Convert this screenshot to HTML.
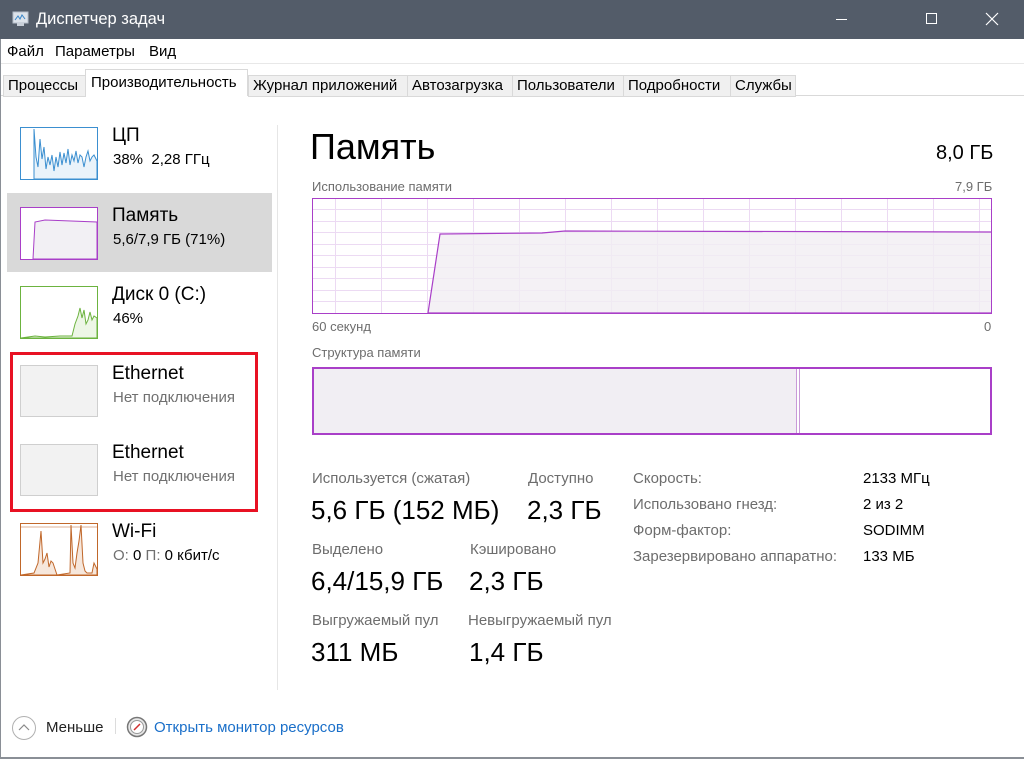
<!DOCTYPE html>
<html><head><meta charset="utf-8"><style>
*{margin:0;padding:0;box-sizing:border-box}
body{width:1024px;height:759px;overflow:hidden;background:#fff;font-family:"Liberation Sans","DejaVu Sans",sans-serif;position:relative;color:#000}
.a{position:absolute;white-space:nowrap}
.t{font-size:15px;top:75px;height:22px;line-height:20px;border:1px solid #d9d9d9;background:#f0f0f0;padding:0 4px;color:#000;overflow:hidden}
.g{color:#707070}
.h{font-size:19px}
.s{font-size:15px}
.big{font-size:26px}
.lb{font-size:15px;color:#6d6d6d}
</style></head><body>
<div class="a" style="left:0;top:0;width:1024px;height:39px;background:#535c69"></div>
<svg class="a" style="left:12px;top:11px" width="18" height="16"><rect x="1" y="1" width="15" height="11" fill="#dde3ea" stroke="#b5bec9"/><polyline points="3,9 6,5 8,8 10,4 13,8" fill="none" stroke="#3a86c8" stroke-width="1"/><rect x="5" y="12" width="7" height="3" fill="#c8cfd8"/></svg>
<div class="a" style="left:36px;top:10px;font-size:16.5px;color:#fff">Диспетчер задач</div>
<div class="a" style="left:836px;top:19px;width:11px;height:1px;background:#fff"></div>
<div class="a" style="left:926px;top:13px;width:11px;height:11px;border:1px solid #fff"></div>
<svg class="a" style="left:985px;top:12px" width="14" height="14"><path d="M1 1L13 13M13 1L1 13" stroke="#fff" stroke-width="1.2"/></svg>
<div class="a" style="left:0;top:39px;width:1px;height:720px;background:#8a8f96"></div>
<div class="a" style="left:0;top:757px;width:1024px;height:2px;background:#8a8f96"></div>
<div class="a" style="left:7px;top:43px;font-size:15px">Файл</div>
<div class="a" style="left:55px;top:43px;font-size:15px">Параметры</div>
<div class="a" style="left:149px;top:43px;font-size:15px">Вид</div>
<div class="a" style="left:1px;top:63px;width:1023px;height:1px;background:#e8e8e8"></div>
<div class="a" style="left:1px;top:95px;width:1023px;height:1px;background:#d9d9d9"></div>
<div class="a t" style="left:3px;width:83px">Процессы</div>
<div class="a t" style="left:85px;top:69px;height:27px;line-height:26px;width:163px;background:#fff;border-bottom:none;padding-left:5px">Производительность</div>
<div class="a t" style="left:248px;width:160px">Журнал приложений</div>
<div class="a t" style="left:407px;width:106px">Автозагрузка</div>
<div class="a t" style="left:512px;width:112px">Пользователи</div>
<div class="a t" style="left:623px;width:108px">Подробности</div>
<div class="a t" style="left:730px;width:66px">Службы</div>

<!-- sidebar -->
<div class="a" style="left:7px;top:193px;width:265px;height:79px;background:#d9d9d9"></div>
<div class="a" style="left:277px;top:125px;width:1px;height:565px;background:#e6e6e6"></div>
<svg class="a" style="left:20px;top:127px" width="78" height="53"><rect x="0.5" y="0.5" width="77" height="52" fill="#fff" stroke="#3b8fd0"/><path d="M14 52L14 2L16 30L18 40L20 12L22 32L24 20L26 42L28 30L30 38L32 28L34 44L36 30L38 40L40 25L42 38L44 26L46 36L48 22L50 38L52 28L54 34L56 24L58 36L60 28L62 30L64 40L66 30L68 24L70 34L72 30L74 28L77 34L77 52Z" fill="#eaf3fa" stroke="#3b8fd0" stroke-width="1"/></svg>
<div class="a h" style="left:112px;top:125px">ЦП</div>
<div class="a s" style="left:113px;top:151px">38%&nbsp; 2,28 ГГц</div>
<svg class="a" style="left:20px;top:207px" width="78" height="53"><rect x="0.5" y="0.5" width="77" height="52" fill="#fff" stroke="#a93fc8"/><path d="M13 52L15 15L25 13L77 15L77 52Z" fill="#f2f0f4" stroke="#a93fc8"/><rect x="0.5" y="0.5" width="77" height="52" fill="none" stroke="#a93fc8"/></svg>
<div class="a h" style="left:112px;top:205px">Память</div>
<div class="a s" style="left:113px;top:231px">5,6/7,9 ГБ (71%)</div>
<svg class="a" style="left:20px;top:286px" width="78" height="53"><rect x="0.5" y="0.5" width="77" height="52" fill="#fff" stroke="#6cb33f"/><path d="M1 52L15 50L25 51L40 50L52 50L55 38L58 30L60 22L62 32L64 24L66 38L68 34L70 26L72 34L74 30L77 32L77 52Z" fill="#edf6e6" stroke="#6cb33f"/></svg>
<div class="a h" style="left:112px;top:284px">Диск 0 (C:)</div>
<div class="a s" style="left:113px;top:310px">46%</div>
<div class="a" style="left:10px;top:352px;width:248px;height:160px;border:3px solid #e81123"></div>
<div class="a" style="left:20px;top:365px;width:78px;height:52px;background:#f2f2f2;border:1px solid #cfcfcf"></div>
<div class="a h" style="left:112px;top:363px">Ethernet</div>
<div class="a s g" style="left:113px;top:389px">Нет подключения</div>
<div class="a" style="left:20px;top:444px;width:78px;height:52px;background:#f2f2f2;border:1px solid #cfcfcf"></div>
<div class="a h" style="left:112px;top:442px">Ethernet</div>
<div class="a s g" style="left:113px;top:468px">Нет подключения</div>
<svg class="a" style="left:20px;top:523px" width="78" height="53"><rect x="0.5" y="0.5" width="77" height="52" fill="#fff" stroke="#c0672a"/><line x1="0" y1="4" x2="78" y2="4" stroke="#c0672a" stroke-width="0.6"/><path d="M1 52L14 50L18 40L21 8L23 40L25 36L27 30L29 44L31 38L33 40L35 46L37 52L50 50L51 2L53 40L55 45L57 30L59 18L61 2L63 40L65 48L67 50L72 50L74 40L77 46L77 52Z" fill="#f6e7dc" stroke="#c0672a"/></svg>
<div class="a h" style="left:112px;top:521px">Wi-Fi</div>
<div class="a s" style="left:113px;top:547px"><span class="g">О:</span> 0 <span class="g">П:</span> 0 кбит/с</div>

<!-- main -->
<div class="a" style="left:310px;top:126px;font-size:36px">Память</div>
<div class="a" style="left:936px;top:142px;font-size:20px">8,0 ГБ</div>
<div class="a lb" style="left:312px;top:179px;font-size:13px">Использование памяти</div>
<div class="a lb" style="left:955px;top:179px;font-size:13px">7,9 ГБ</div>
<svg class="a" style="left:312px;top:198px" width="680" height="116">
<g stroke="#ecdaf3" stroke-width="1">
<path d="M0 11.5H680M0 23.5H680M0 34.5H680M0 46.5H680M0 57.5H680M0 69.5H680M0 80.5H680M0 92.5H680M0 103.5H680"/>
<path d="M23.5 0V116M69.5 0V116M115.5 0V116M161.5 0V116M207.5 0V116M253.5 0V116M299.5 0V116M345.5 0V116M391.5 0V116M437.5 0V116M483.5 0V116M529.5 0V116M575.5 0V116M621.5 0V116M667.5 0V116"/>
</g>
<path d="M116 115L128 36L230 35L253 33L680 34L680 115Z" fill="#f1eef3" fill-opacity="0.8" stroke="#a93fc8" stroke-width="1.2"/>
<rect x="0.5" y="0.5" width="679" height="115" fill="none" stroke="#a93fc8"/>
</svg>
<div class="a lb" style="left:312px;top:319px;font-size:13px">60 секунд</div>
<div class="a lb" style="left:984px;top:319px;font-size:13px">0</div>
<div class="a lb" style="left:312px;top:345px;font-size:13px">Структура памяти</div>
<div class="a" style="left:312px;top:367px;width:680px;height:68px;border:2px solid #a93fc8;background:#fff"></div>
<div class="a" style="left:314px;top:369px;width:482px;height:64px;background:#f1eef3"></div>
<div class="a" style="left:796px;top:369px;width:1px;height:64px;background:#c99ad8"></div>
<div class="a" style="left:799px;top:369px;width:1px;height:64px;background:#c99ad8"></div>

<div class="a lb" style="left:312px;top:470px">Используется (сжатая)</div>
<div class="a big" style="left:311px;top:495px">5,6 ГБ (152 МБ)</div>
<div class="a lb" style="left:528px;top:470px">Доступно</div>
<div class="a big" style="left:527px;top:495px">2,3 ГБ</div>
<div class="a lb" style="left:312px;top:541px">Выделено</div>
<div class="a big" style="left:311px;top:566px">6,4/15,9 ГБ</div>
<div class="a lb" style="left:470px;top:541px">Кэшировано</div>
<div class="a big" style="left:469px;top:566px">2,3 ГБ</div>
<div class="a lb" style="left:312px;top:612px">Выгружаемый пул</div>
<div class="a big" style="left:311px;top:637px">311 МБ</div>
<div class="a lb" style="left:468px;top:612px">Невыгружаемый пул</div>
<div class="a big" style="left:469px;top:637px">1,4 ГБ</div>

<div class="a lb" style="left:633px;top:470px">Скорость:</div>
<div class="a lb" style="left:633px;top:496px">Использовано гнезд:</div>
<div class="a lb" style="left:633px;top:522px">Форм-фактор:</div>
<div class="a lb" style="left:633px;top:548px">Зарезервировано аппаратно:</div>
<div class="a s" style="left:863px;top:470px">2133 МГц</div>
<div class="a s" style="left:863px;top:496px">2 из 2</div>
<div class="a s" style="left:863px;top:522px">SODIMM</div>
<div class="a s" style="left:863px;top:548px">133 МБ</div>

<!-- footer -->
<svg class="a" style="left:11px;top:715px" width="26" height="26"><circle cx="13" cy="13" r="11.5" fill="#fff" stroke="#b0b0b0"/><path d="M8 15L13 10L18 15" fill="none" stroke="#8a8a8a" stroke-width="1.2"/></svg>
<div class="a" style="left:46px;top:719px;font-size:15px;color:#222">Меньше</div>
<div class="a" style="left:115px;top:718px;width:1px;height:16px;background:#dcdcdc"></div>
<svg class="a" style="left:126px;top:716px" width="22" height="22"><circle cx="11" cy="11" r="9.5" fill="#e8e8e8" stroke="#777" stroke-width="1.5"/><circle cx="11" cy="11" r="6.5" fill="#fff" stroke="#999"/><path d="M8 14L14 8" stroke="#d03030" stroke-width="1.5"/></svg>
<div class="a" style="left:154px;top:719px;font-size:15px;color:#1a6fc9">Открыть монитор ресурсов</div>
</body></html>
